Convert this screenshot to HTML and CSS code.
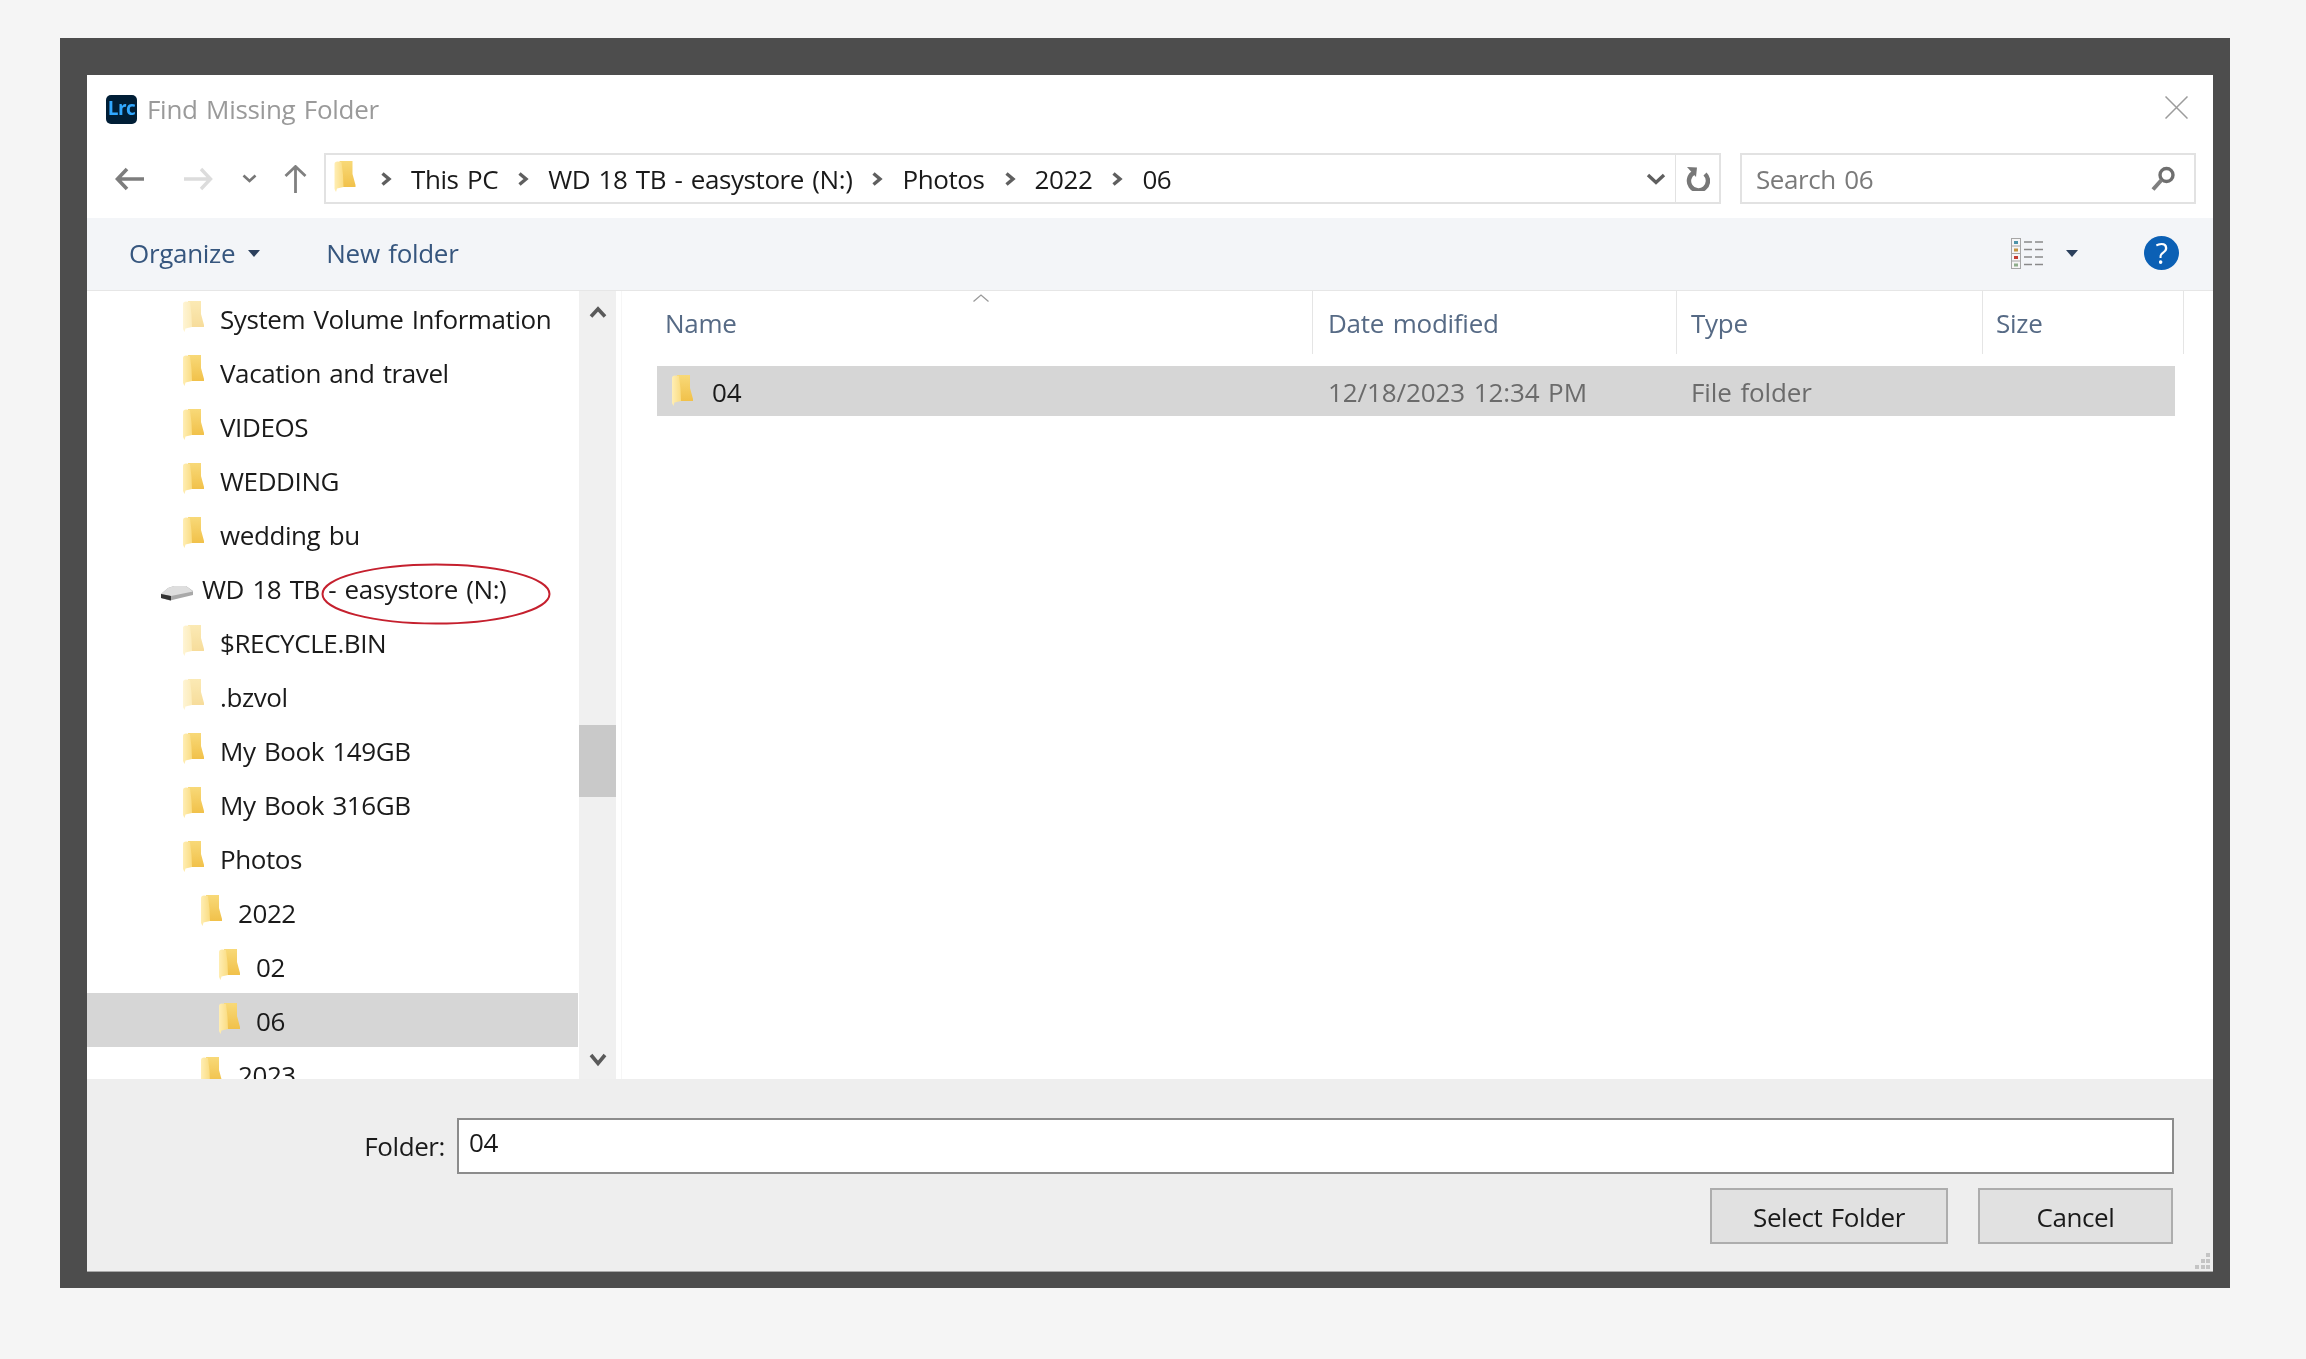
FILE: index.html
```html
<!DOCTYPE html>
<html lang="en">
<head>
<meta charset="utf-8">
<title>Find Missing Folder</title>
<link rel="stylesheet" href="styles.css">
</head>
<body>
<svg class="defs" width="0" height="0" aria-hidden="true">
  <defs>
    <linearGradient id="fb" x1="0" y1="0" x2="0" y2="1"><stop offset="0" stop-color="#f8d978"/><stop offset="1" stop-color="#f1c14a"/></linearGradient>
    <linearGradient id="ff" x1="0" y1="0" x2="1" y2="0"><stop offset="0" stop-color="#ffeeb4"/><stop offset="1" stop-color="#fadc82"/></linearGradient>
    <symbol id="folder" viewBox="0 0 21 31">
      <path d="M5 0H18V13L21 24V26H6Z" fill="url(#fb)"/>
      <path d="M0 3C0 1.500 1 .5 3 .5L7 1 8.500 14 9 26 2.500 27.500 1.500 31 0 28Z" fill="url(#ff)"/>
    </symbol>
    <symbol id="chev" viewBox="0 0 12 14"><path d="M2.500 1.500 9 7 2.500 12.500" fill="none" stroke="#5f5f5f" stroke-width="3.400"/></symbol>
    <symbol id="down" viewBox="0 0 20 12"><path d="M2 2 10 9.500 18 2" fill="none" stroke="#5f5f5f" stroke-width="3.400"/></symbol>
  </defs>
</svg>
<div class="frame">
  <div class="dialog">
    <header class="titlebar">
      <span class="lrc">Lrc</span>
      <span class="title">Find Missing Folder</span>
      <svg class="close" viewBox="0 0 23 23"><path d="M.5.5 22.500 22.500M22.500.5.5 22.500" fill="none" stroke="#9c9c9c" stroke-width="1.500"/></svg>
    </header>
    <nav class="nav">
      <svg class="ic-back" viewBox="0 0 29 24"><path d="M12 2 2.500 12 12 22M3 12H29" fill="none" stroke="#7d7d7d" stroke-width="3.600"/></svg>
      <svg class="ic-fwd" viewBox="0 0 29 24"><path d="M17 2 26.500 12 17 22M26 12H0" fill="none" stroke="#dcdcdc" stroke-width="3.400"/></svg>
      <svg class="ic-hist" viewBox="0 0 15 9"><path d="M1.500 1.500 7.500 7 13.500 1.500" fill="none" stroke="#777" stroke-width="2.600"/></svg>
      <svg class="ic-up" viewBox="0 0 23 28"><path d="M1.500 11 11.500 1.500 21.500 11M11.500 2V28" fill="none" stroke="#808080" stroke-width="2.800"/></svg>
      <div class="address">
        <div class="crumbs">
          <svg class="crumb-folder"><use href="#folder"/></svg>
          <svg class="crumb-chev"><use href="#chev"/></svg><span>This PC</span>
          <svg class="crumb-chev"><use href="#chev"/></svg><span>WD 18 TB - easystore (N:)</span>
          <svg class="crumb-chev"><use href="#chev"/></svg><span>Photos</span>
          <svg class="crumb-chev"><use href="#chev"/></svg><span>2022</span>
          <svg class="crumb-chev"><use href="#chev"/></svg><span>06</span>
        </div>
        <svg class="addr-drop"><use href="#down"/></svg>
        <div class="refresh">
          <svg viewBox="0 0 25 25"><path d="M9 6.500A9.500 9.500 0 1 0 20 8" fill="none" stroke="#777" stroke-width="4.400"/><path d="M2 1 12 1.500 11 11Z" fill="#777"/></svg>
        </div>
      </div>
      <div class="search">
        <span>Search 06</span>
        <svg viewBox="0 0 25 25"><circle cx="15.500" cy="9" r="6.500" fill="none" stroke="#6f6f6f" stroke-width="3.400"/><path d="M10.500 14 2 23.500" fill="none" stroke="#7f7f7f" stroke-width="4"/></svg>
      </div>
    </nav>
    <div class="toolbar">
      <span class="tool organize">Organize</span>
      <span class="caret"></span>
      <span class="tool newfolder">New folder</span>
      <svg class="viewicon" viewBox="0 0 32 31">
        <rect x=".5" y=".5" width="9" height="30" fill="#f6f6f6" stroke="#a6a6a6"/>
        <path d="M1 8H9M1 15.500H9M1 23H9" stroke="#a6a6a6"/>
        <rect x="3" y="3" width="4" height="3" fill="#4c93a8"/><rect x="3" y="10.500" width="4" height="3" fill="#c2933f"/><rect x="3" y="18" width="4" height="3" fill="#c43c32"/><rect x="3" y="25.500" width="4" height="3" fill="#8fae8c"/>
        <path d="M13 4H21M24 4H32M13 11.500H21M24 11.500H32M13 19H21M24 19H32M13 26.500H21M24 26.500H32" stroke="#8a8a8a" stroke-width="1.500"/>
      </svg>
      <span class="caret caret-view"></span>
      <span class="help">?</span>
    </div>
    <main class="main">
      <div class="tree">
        <div class="row lv0"><svg class="folder pale"><use href="#folder"/></svg><span>System Volume Information</span></div>
        <div class="row lv0"><svg class="folder"><use href="#folder"/></svg><span>Vacation and travel</span></div>
        <div class="row lv0"><svg class="folder"><use href="#folder"/></svg><span>VIDEOS</span></div>
        <div class="row lv0"><svg class="folder"><use href="#folder"/></svg><span>WEDDING</span></div>
        <div class="row lv0"><svg class="folder"><use href="#folder"/></svg><span>wedding bu</span></div>
        <div class="row drive">
          <svg class="drive-ic" viewBox="0 0 34 16">
            <path d="M1 9 8 3 14 1H26L33 6V10L10 15.500 1 13Z" fill="#a9a9a9"/>
            <path d="M1 9 11 11 33 6.500 26 1H14L8 3Z" fill="#dedede"/>
            <path d="M1 9 11 11V15.500L1 13Z" fill="#333"/>
          </svg>
          <span>WD 18 TB - easystore (N:)</span>
        </div>
        <div class="row lv0"><svg class="folder pale"><use href="#folder"/></svg><span>$RECYCLE.BIN</span></div>
        <div class="row lv0"><svg class="folder pale"><use href="#folder"/></svg><span>.bzvol</span></div>
        <div class="row lv0"><svg class="folder"><use href="#folder"/></svg><span>My Book 149GB</span></div>
        <div class="row lv0"><svg class="folder"><use href="#folder"/></svg><span>My Book 316GB</span></div>
        <div class="row lv0"><svg class="folder"><use href="#folder"/></svg><span>Photos</span></div>
        <div class="row lv1"><svg class="folder"><use href="#folder"/></svg><span>2022</span></div>
        <div class="row lv2"><svg class="folder"><use href="#folder"/></svg><span>02</span></div>
        <div class="row lv2 selected"><svg class="folder"><use href="#folder"/></svg><span>06</span></div>
        <div class="row lv1"><svg class="folder"><use href="#folder"/></svg><span>2023</span></div>
        <svg class="annotation" viewBox="0 0 230 62"><ellipse cx="115" cy="31" rx="113.500" ry="29.500" fill="none" stroke="#c5202e" stroke-width="2"/></svg>
      </div>
      <div class="scrollbar">
        <div class="sb-btn"><svg class="sb-up" viewBox="0 0 18 12"><path d="M2 10.500 9 3 16 10.500" fill="none" stroke="#5a5a5a" stroke-width="3.600"/></svg></div>
        <div class="sb-space"></div>
        <div class="sb-thumb"></div>
        <div class="sb-rest"></div>
        <div class="sb-btn sb-btn-end"><svg class="sb-dn" viewBox="0 0 18 14"><path d="M2 2 9 10.500 16 2" fill="none" stroke="#5a5a5a" stroke-width="3.600"/></svg></div>
      </div>
      <section class="list">
        <div class="list-head">
          <div class="col col-name">Name<svg class="sort" viewBox="0 0 16 8"><path d="M.5 7.500 8 1 15.500 7.500" fill="none" stroke="#9a9a9a" stroke-width="1.300"/></svg></div>
          <div class="col col-date">Date modified</div>
          <div class="col col-type">Type</div>
          <div class="col col-size">Size</div>
        </div>
        <div class="list-row">
          <div class="cell-name"><svg class="folder"><use href="#folder"/></svg><span>04</span></div>
          <div class="cell-date">12/18/2023 12:34 PM</div>
          <div class="cell-type">File folder</div>
        </div>
      </section>
    </main>
    <footer class="bottom">
      <div class="folder-line">
        <label class="folder-label">Folder:</label>
        <div class="folder-input">04</div>
      </div>
      <div class="buttons">
        <button class="btn btn-select">Select Folder</button>
        <button class="btn btn-cancel">Cancel</button>
      </div>
      <svg class="grip" viewBox="0 0 16 16"><path d="M11 0h4v4h-4zM6 6h4v4H6zM11 6h4v4h-4zM0 12h4v4H0zM6 12h4v4H6zM11 12h4v4h-4z" fill="#c4c4c4"/></svg>
    </footer>
  </div>
</div>
</body>
</html>
```
FILE: styles.css
```css
* { box-sizing: border-box; }
html, body { margin: 0; height: 100%; }
body {
  background: #f5f5f5;
  padding: 38px 76px 71px 60px;
  font-family: "Open Sans", "Noto Sans", sans-serif;
  font-size: 26px;
  color: #1a1a1a;
  letter-spacing: -.41px;
  word-spacing: 2px;
  overflow: hidden;
}
.defs { position: absolute; }
.frame {
  width: 2170px;
  height: 1250px;
  background: #4d4d4d;
  padding: 37px 17px 16px 27px;
  display: flex;
}
.dialog {
  flex: 1;
  background: #fff;
  display: flex;
  flex-direction: column;
  border-bottom: 1px solid #a8a8a8;
  filter: blur(.35px);
}
.titlebar {
  height: 78px;
  flex: none;
  display: flex;
  align-items: center;
  padding: 0 25px 0 19px;
}
.lrc {
  width: 31px;
  height: 29px;
  margin-top: -9px;
  border-radius: 5px;
  background: #001e36;
  color: #31a8ff;
  font-size: 19px;
  font-weight: 700;
  letter-spacing: -.5px;
  line-height: 27px;
  text-align: center;
}
.title { margin-left: 10px; margin-top: -11px; color: #9a9a9a; letter-spacing: -.3px; }
.close { width: 23px; height: 23px; margin-left: auto; margin-top: -13px; }

.nav { height: 51px; flex: none; display: flex; align-items: center; }
.ic-back { width: 29px; height: 24px; margin-left: 28px; }
.ic-fwd { width: 29px; height: 24px; margin-left: 40px; }
.ic-hist { width: 15px; height: 9px; margin-left: 29px; }
.ic-up { width: 23px; height: 28px; margin-left: 27px; }
.address {
  width: 1397px;
  height: 51px;
  margin-left: 17px;
  border: 2px solid #e2e2e2;
  display: flex;
  align-items: center;
}
.crumbs { display: flex; align-items: center; gap: 19px; padding-left: 8px; }
.crumb-folder { width: 22px; height: 31px; margin-top: -4px; margin-right: 5px; }
.crumb-chev { width: 12px; height: 14px; }
.addr-drop { width: 20px; height: 12px; margin-left: auto; margin-right: 9px; }
.refresh {
  width: 44px;
  height: 100%;
  border-left: 1px solid #e2e2e2;
  display: flex;
  align-items: center;
  justify-content: center;
}
.refresh svg { width: 25px; height: 25px; }
.search {
  width: 456px;
  height: 51px;
  margin-left: 19px;
  border: 2px solid #e2e2e2;
  display: flex;
  align-items: center;
  justify-content: space-between;
  padding: 0 18px 0 14px;
  color: #7a7a7a;
}
.search svg { width: 25px; height: 25px; }

.toolbar {
  height: 73px;
  margin-top: 14px;
  flex: none;
  background: #f3f5f8;
  border-bottom: 1px solid #e6e6e6;
  display: flex;
  align-items: center;
  padding: 0 34px 2px 42px;
}
.tool { color: #36567e; letter-spacing: -.3px; }
.caret {
  width: 0;
  height: 0;
  border-left: 6px solid transparent;
  border-right: 6px solid transparent;
  border-top: 7px solid #2a3f5c;
  margin-left: 13px;
}
.newfolder { margin-left: 66px; }
.viewicon { width: 32px; height: 31px; margin-left: auto; }
.caret-view { margin-left: 23px; }
.help {
  width: 35px;
  height: 34px;
  margin-left: 66px;
  border-radius: 50%;
  background: #0b60b5;
  color: #fff;
  font-size: 29px;
  line-height: 34px;
  text-align: center;
}

.main { flex: none; height: 788px; display: flex; overflow: hidden; }
.tree { width: 491px; flex: none; overflow: hidden; position: relative; }
.row { height: 54px; display: flex; align-items: center; padding-top: 1px; }
.lv0 { padding-left: 96px; }
.lv1 { padding-left: 114px; }
.lv2 { padding-left: 132px; }
.drive { padding-left: 73px; }
.selected { background: #d6d6d6; }
.folder { width: 21px; height: 31px; margin-right: 16px; margin-top: -4px; flex: none; }
.pale { opacity: .55; }
.drive-ic { width: 34px; height: 16px; margin-right: 8px; margin-top: 9px; }
.annotation { position: absolute; left: 234px; top: 272px; width: 230px; height: 62px; }

.scrollbar {
  width: 37px;
  margin-left: 1px;
  margin-right: 5px;
  flex: none;
  background: #f0f0f0;
  display: flex;
  flex-direction: column;
}
.sb-btn { height: 46px; flex: none; display: flex; justify-content: center; padding-top: 15px; }
.sb-btn-end { padding-top: 20px; }
.sb-up { width: 18px; height: 12px; }
.sb-dn { width: 18px; height: 14px; }
.sb-space { height: 388px; flex: none; }
.sb-thumb { height: 72px; flex: none; background: #c9c9c9; }
.sb-rest { flex: 1; }

.list { flex: 1; border-left: 1px solid #f6f6f6; }
.list-head { display: flex; height: 63px; padding-left: 34px; color: #566a85; letter-spacing: -.25px; }
.col { display: flex; align-items: center; border-right: 1px solid #e5e5e5; position: relative; }
.col-name { width: 657px; padding-left: 9px; }
.col-date { width: 364px; padding-left: 15px; }
.col-type { width: 306px; padding-left: 14px; }
.col-size { width: 201px; padding-left: 13px; }
.sort { position: absolute; left: 317px; top: 3px; width: 16px; height: 8px; }
.list-row {
  display: flex;
  align-items: center;
  height: 50px;
  width: 1518px;
  margin-top: 12px;
  margin-left: 35px;
  padding-top: 2px;
  background: #d6d6d6;
  letter-spacing: -.1px;
}
.cell-name { width: 671px; padding-left: 15px; display: flex; align-items: center; }
.cell-name .folder { margin-right: 19px; }
.cell-date { width: 363px; color: #6b6b6b; }
.cell-type { color: #6b6b6b; }

.bottom { flex: 1; background: #eee; position: relative; padding: 39px 39px 0 0; }
.folder-line { display: flex; justify-content: flex-end; }
.folder-label { margin-top: 10px; margin-right: 12px; }
.folder-input {
  width: 1717px;
  height: 56px;
  background: #fff;
  border: 2px solid #8c8c8c;
  padding-left: 10px;
  line-height: 44px;
}
.buttons { display: flex; justify-content: flex-end; gap: 30px; margin-top: 14px; }
.btn {
  height: 56px;
  background: #e1e1e1;
  border: 2px solid #adadad;
  font: inherit;
  letter-spacing: inherit;
  word-spacing: inherit;
  color: inherit;
  padding: 2px 0 0;
}
.btn-select { width: 238px; }
.btn-cancel { width: 195px; margin-right: 1px; }
.grip { position: absolute; right: 2px; bottom: 2px; width: 16px; height: 16px; }
```
